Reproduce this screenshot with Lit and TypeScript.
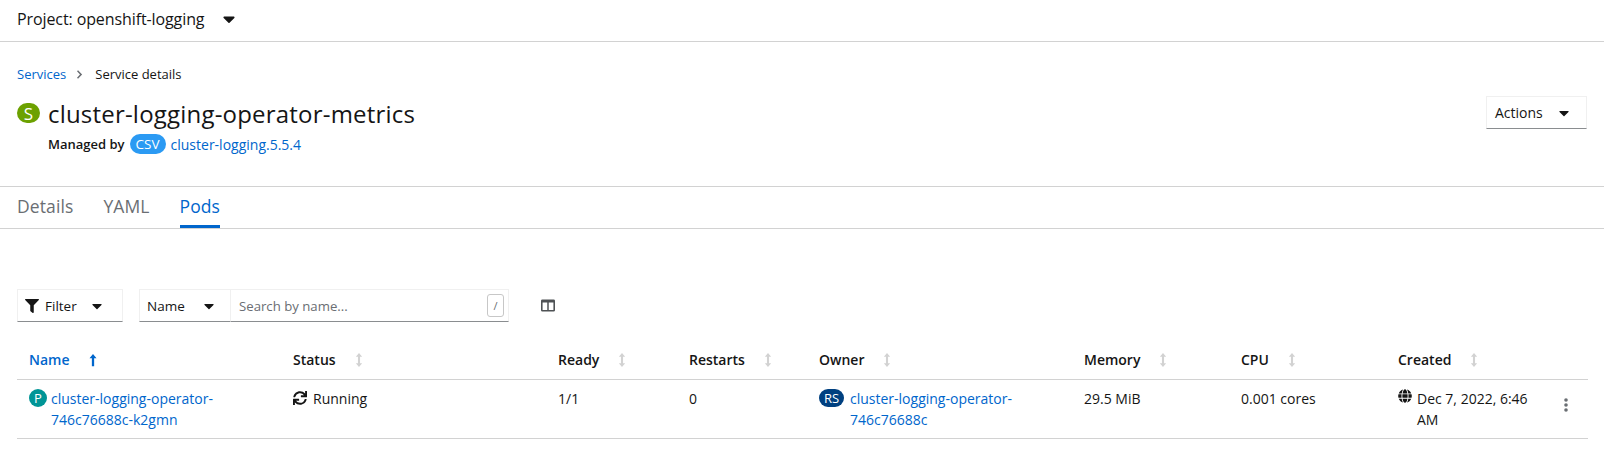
import { LitElement, html, css, svg } from 'lit';
import { customElement } from 'lit/decorators.js';

const caret = html`<svg class="caret" viewBox="0 0 320 512"><path d="M31.3 192h257.3c17.8 0 26.7 21.5 14.1 34.1L174.1 354.8c-7.8 7.8-20.5 7.8-28.3 0L17.2 226.1C4.6 213.5 13.5 192 31.3 192z"/></svg>`;
const sortBoth = svg`<svg class="sort" viewBox="0 0 10 16"><path d="M5 0 8.6 4.2H6.2v7.6h2.4L5 16 1.4 11.8h2.4V4.2H1.4z"/></svg>`;
const sortUp = svg`<svg class="sort up" viewBox="0 0 10 16"><path d="M5 1 9 6H6.3v9H3.7V6H1z"/></svg>`;

const columns = [
  { label: 'Status' },
  { label: 'Ready' },
  { label: 'Restarts' },
  { label: 'Owner' },
  { label: 'Memory' },
  { label: 'CPU' },
  { label: 'Created' },
];

@customElement('app-root')
export class AppRoot extends LitElement {
  static styles = css`
    :host {
      display: block;
      height: 456px;
      overflow: hidden;
      background: #fff;
      color: #151515;
      font-family: 'Open Sans', 'Liberation Sans', sans-serif;
      font-size: 14px;
    }
    a {
      color: #06c;
      text-decoration: none;
    }
    svg {
      display: block;
      fill: currentColor;
    }
    .caret {
      width: 10px;
      height: 16px;
      flex: none;
    }
    .project {
      height: 42px;
      box-sizing: border-box;
      border-bottom: 1px solid #d2d2d2;
      display: flex;
      align-items: center;
      padding: 0 0 3px 17px;
      font-size: 16px;
      letter-spacing: -0.1px;
      gap: 19px;
    }
    .project .caret {
      width: 12px;
      height: 20px;
    }
    .head {
      height: 145px;
      box-sizing: border-box;
      border-bottom: 1px solid #d2d2d2;
      padding: 23px 17px 0;
      position: relative;
    }
    .crumbs {
      display: flex;
      align-items: center;
      height: 18px;
      font-size: 13px;
    }
    .crumbs svg {
      width: 6px;
      height: 9px;
      margin: 0 12px 0 11px;
      fill: #6a6e73;
    }
    .title {
      display: flex;
      align-items: center;
      gap: 8px;
      margin-top: 14px;
      height: 32px;
    }
    .title h1 {
      margin: 0;
      font-size: 24px;
      font-weight: 400;
      letter-spacing: 0.2px;
    }
    .badge {
      display: inline-flex;
      align-items: center;
      justify-content: center;
      border-radius: 20px;
      color: #fff;
      flex: none;
    }
    .badge.s {
      background: #6ca100;
      width: 23px;
      height: 20px;
      font-size: 17px;
    }
    .badge.p {
      background: #009596;
      width: 18px;
      height: 18px;
      font-size: 13px;
    }
    .badge.rs {
      background: #004080;
      width: 25px;
      height: 18px;
      font-size: 13px;
      margin-right: 2px;
    }
    .badge.csv {
      background: #2b9af3;
      width: 36px;
      height: 20px;
      font-size: 13.5px;
      font-weight: 400;
    }
    .managed {
      display: flex;
      align-items: center;
      gap: 5px;
      margin: 5px 0 0 31px;
      height: 20px;
      font-size: 13px;
      font-weight: 600;
    }
    .managed a {
      font-size: 14px;
      font-weight: 400;
    }
    .actions {
      position: absolute;
      top: 54px;
      right: 17px;
    }
    .control {
      display: flex;
      align-items: center;
      box-sizing: border-box;
      height: 33px;
      border: 1px solid #f0f0f0;
      border-bottom: 1px solid #8a8d90;
    }
    .actions.control {
      width: 101px;
      padding: 0 17px 0 8px;
      justify-content: space-between;
      font-size: 14px;
    }
    .tabs {
      display: flex;
      height: 42px;
      box-sizing: border-box;
      border-bottom: 1px solid #d2d2d2;
      padding-left: 17px;
      gap: 30px;
      font-size: 17.5px;
      letter-spacing: 0.1px;
      color: #6a6e73;
    }
    .tabs span {
      display: flex;
      align-items: center;
      padding-bottom: 3px;
      height: 41px;
      box-sizing: border-box;
    }
    .tabs .on {
      color: #06c;
      border-bottom: 3px solid #06c;
      padding-bottom: 0;
    }
    .toolbar {
      display: flex;
      align-items: center;
      margin: 60px 0 0 17px;
    }
    .filter {
      width: 106px;
      padding: 0 20px 0 7px;
      justify-content: space-between;
      font-size: 13.5px;
    }
    .filter-label {
      display: flex;
      align-items: center;
      gap: 6px;
    }
    .filter-label svg {
      width: 14px;
      height: 14px;
    }
    .name-select {
      width: 92px;
      margin-left: 16px;
      padding: 0 16px 0 7px;
      justify-content: space-between;
      font-size: 13.5px;
    }
    .search {
      width: 278px;
      border-left: 0;
      padding: 0 4px 0 8px;
      justify-content: space-between;
      color: #6a6e73;
      font-size: 13.2px;
    }
    .slash {
      width: 15px;
      height: 21px;
      border: 1px solid #c7c7c7;
      border-radius: 3px;
      display: flex;
      align-items: center;
      justify-content: center;
      font-size: 11px;
    }
    .cols {
      width: 14px;
      height: 13px;
      margin-left: 32px;
      color: #4f5255;
    }
    .row {
      display: grid;
      grid-template-columns: 264px 265px 131px 130px 265px 157px 157px 202px;
      margin: 0 16px 0 17px;
      border-bottom: 1px solid #d2d2d2;
    }
    .header {
      margin-top: 20px;
      height: 38px;
      font-weight: 600;
      font-size: 14px;
      box-sizing: border-box;
    }
    .th {
      display: flex;
      align-items: center;
      gap: 18px;
      padding-left: 12px;
      padding-bottom: 2px;
    }
    .th.active {
      color: #06c;
    }
    .sort {
      width: 10px;
      height: 14px;
      fill: #d2d2d2;
    }
    .sort.up {
      fill: #06c;
    }
    .body {
      height: 59px;
      box-sizing: border-box;
      line-height: 21px;
      font-size: 14px;
    }
    .td {
      padding: 8px 12px 0;
      display: flex;
      gap: 4px;
      align-items: flex-start;
      position: relative;
    }
    .td .badge {
      margin-top: 1px;
    }
    .td .icon {
      width: 14px;
      height: 14px;
      margin-top: 3px;
      flex: none;
    }
    .status {
      gap: 6px;
    }
    .created {
      gap: 5px;
      padding-right: 52px;
    }
    .created .icon {
      margin-top: 1px;
    }
    .kebab {
      position: absolute;
      right: 20px;
      top: 18px;
      width: 4px;
      height: 14px;
      fill: #6a6e73;
    }
  `;

  render() {
    return html`
      <div class="project"><span>Project: openshift-logging</span>${caret}</div>

      <div class="head">
        <div class="crumbs">
          <a href="#">Services</a>
          <svg viewBox="0 0 7 10"><path d="M1.200 0 6 5 1.200 10 0 8.700 3.500 5 0 1.300z"/></svg>
          <span>Service details</span>
        </div>
        <div class="title">
          <span class="badge s">S</span>
          <h1>cluster-logging-operator-metrics</h1>
        </div>
        <div class="managed">
          <span>Managed by</span>
          <span class="badge csv">CSV</span>
          <a href="#">cluster-logging.5.5.4</a>
        </div>
        <div class="control actions"><span>Actions</span>${caret}</div>
      </div>

      <div class="tabs">
        <span>Details</span>
        <span>YAML</span>
        <span class="on">Pods</span>
      </div>

      <div class="toolbar">
        <div class="control filter">
          <span class="filter-label">
            <svg viewBox="0 0 512 512"><path d="M487.976 0H24.028C2.71 0-8.047 25.866 7.058 40.971L192 225.941V432c0 7.831 3.821 15.17 10.237 19.662l80 55.98C298.02 518.69 320 507.493 320 487.98V225.941l184.947-184.97C520.021 25.896 509.338 0 487.976 0z"/></svg>
            Filter
          </span>
          ${caret}
        </div>
        <div class="control name-select"><span>Name</span>${caret}</div>
        <div class="control search"><span>Search by name...</span><span class="slash">/</span></div>
        <svg class="cols" viewBox="0 0 15 13"><path fill-rule="evenodd" d="M1.500 0h12A1.500 1.500 0 0 1 15 1.500v10a1.500 1.500 0 0 1-1.500 1.500h-12A1.500 1.500 0 0 1 0 11.500v-10A1.500 1.500 0 0 1 1.500 0zM1.700 3.200v8.100h5V3.200zm6.600 0v8.100h5V3.200z"/></svg>
      </div>

      <div class="row header">
        <div class="th active">Name ${sortUp}</div>
        ${columns.map((c) => html`<div class="th">${c.label} ${sortBoth}</div>`)}
      </div>

      <div class="row body">
        <div class="td">
          <span class="badge p">P</span>
          <a href="#">cluster-logging-operator-746c76688c-k2gmn</a>
        </div>
        <div class="td status">
          <svg class="icon" viewBox="0 0 512 512"><path d="M440.650 12.570l4 82.770A247.160 247.160 0 0 0 255.830 8C134.730 8 33.910 94.920 12.290 209.820A12 12 0 0 0 24.090 224h49.050a12 12 0 0 0 11.670-9.260 175.910 175.910 0 0 1 317-56.940l-101.460-4.860a12 12 0 0 0-12.570 12v47.410a12 12 0 0 0 12 12H500a12 12 0 0 0 12-12V12a12 12 0 0 0-12-12h-47.370a12 12 0 0 0-11.980 12.570zM255.830 432a175.610 175.610 0 0 1-146-77.800l101.800 4.870a12 12 0 0 0 12.570-12v-47.400a12 12 0 0 0-12-12H12a12 12 0 0 0-12 12V500a12 12 0 0 0 12 12h47.350a12 12 0 0 0 12-12.600l-4.150-82.570A247.170 247.170 0 0 0 255.830 504c121.110 0 221.930-86.920 243.550-201.820a12 12 0 0 0-11.800-14.180h-49.050a12 12 0 0 0-11.670 9.260A175.860 175.860 0 0 1 255.830 432z"/></svg>
          <span>Running</span>
        </div>
        <div class="td">1/1</div>
        <div class="td">0</div>
        <div class="td">
          <span class="badge rs">RS</span>
          <a href="#">cluster-logging-operator-746c76688c</a>
        </div>
        <div class="td">29.5 MiB</div>
        <div class="td">0.001 cores</div>
        <div class="td created">
          <svg class="icon" viewBox="0 0 496 512"><path d="M336.500 160C322 70.700 287.800 8 248 8s-74 62.700-88.500 152h177zM152 256c0 22.200 1.200 43.500 3.300 64h185.300c2.100-20.500 3.300-41.800 3.300-64s-1.200-43.500-3.300-64H155.300c-2.100 20.500-3.300 41.800-3.300 64zm324.700-96c-28.600-67.900-86.500-120.400-158-141.600 24.400 33.800 41.200 84.700 50 141.600h108zM177.200 18.400C105.800 39.600 47.800 92.100 19.300 160h108c8.700-56.900 25.500-107.800 49.900-141.600zM487.400 192H372.700c2.100 21 3.300 42.500 3.300 64s-1.200 43-3.300 64h114.600c5.500-20.500 8.600-41.800 8.600-64s-3.100-43.500-8.500-64zM120 256c0-21.500 1.200-43 3.300-64H8.600C3.200 212.500 0 233.800 0 256s3.200 43.500 8.600 64h114.600c-2-21-3.200-42.500-3.200-64zm39.500 96c14.500 89.300 48.700 152 88.500 152s74-62.700 88.500-152h-177zm159.300 141.600c71.400-21.200 129.400-73.700 158-141.600h-108c-8.800 56.900-25.600 107.800-50 141.600zM19.300 352c28.600 67.900 86.500 120.400 158 141.600-24.400-33.800-41.200-84.700-50-141.600h-108z"/></svg>
          <span>Dec 7, 2022, 6:46 AM</span>
          <svg class="kebab" viewBox="0 0 4 14"><circle cx="2" cy="2" r="1.800"/><circle cx="2" cy="7" r="1.800"/><circle cx="2" cy="12" r="1.800"/></svg>
        </div>
      </div>
    `;
  }
}
